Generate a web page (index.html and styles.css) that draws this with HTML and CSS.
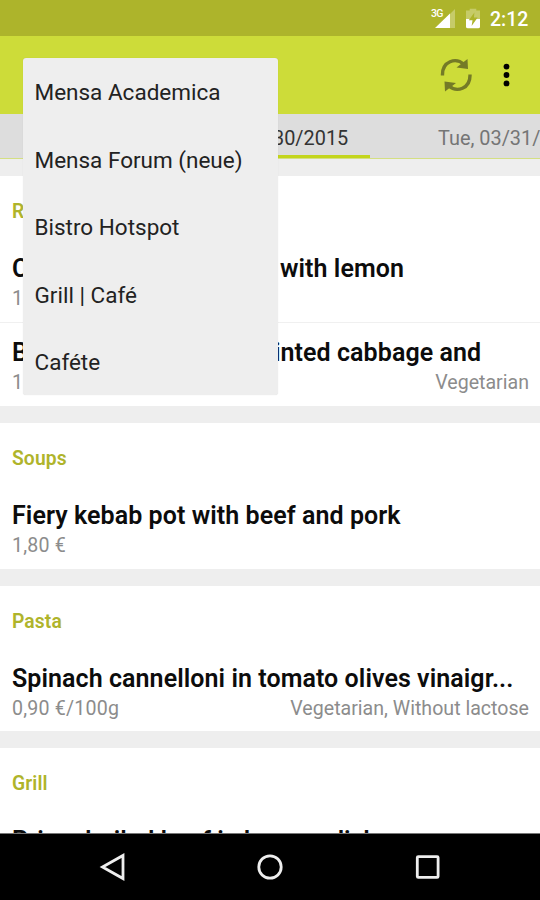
FILE: index.html
```
<!DOCTYPE html>
<html lang="en">
<head>
<meta charset="utf-8">
<title>Mensa</title>
<link rel="stylesheet" href="styles.css">
</head>
<body>
<div class="screen">
  <header class="status">
    <svg class="signal" width="21" height="20" viewBox="0 0 21 20"><path class="dim" d="M21 0V19H2Z"/><path class="lit" d="M16 4.500V19H1Z"/></svg>
    <span class="network">3G</span>
    <svg class="battery" width="14" height="21" viewBox="0 0 15 21"><path class="dim" d="M4 0h7v2h4v10H0V2h4z"/><path class="lit" d="M0 11h15v8q0 2-2 2H2q-2 0-2-2z"/><path class="bolt" d="M9 4 3 12.500h4l-1 6 6.500-9H8.500z"/></svg>
    <span class="clock">2:12</span>
  </header>
  <div class="toolbar">
    <svg class="refresh" width="32" height="34" viewBox="0 0 32 34"><g class="arc"><path d="M2.500 17.500C2 3 16-1 24 6.500"/><path d="M30 16.500c.5 14.500-13.500 18.500-21.500 11"/></g><path class="tip" d="M27.500 1l.5 10-11.500-1.500zM5 33.500 4.500 23.500 16 25z"/></svg>
    <svg class="more" width="8" height="24" viewBox="0 0 8 24"><circle cx="4.500" cy="3.600" r="2.900"/><circle cx="4.500" cy="12" r="2.900"/><circle cx="4.500" cy="20.400" r="2.900"/></svg>
  </div>
  <nav class="tabs">
    <div class="tab current"><span>30/2015</span></div>
    <div class="tab next"><span>Tue, 03/31/</span></div>
  </nav>
  <main class="list">
    <section class="card">
      <h2>R</h2>
      <article><h3 class="split"><span>C</span><span>with lemon</span></h3><p><span>1</span></p></article>
      <article class="ruled"><h3 class="split"><span>B</span><span class="pulled">inted cabbage and</span></h3><p><span>1</span><span>Vegetarian</span></p></article>
    </section>
    <section class="card">
      <h2>Soups</h2>
      <article><h3>Fiery kebab pot with beef and pork</h3><p><span>1,80 €</span></p></article>
    </section>
    <section class="card">
      <h2>Pasta</h2>
      <article><h3>Spinach cannelloni in tomato olives vinaigr...</h3><p><span>0,90 €/100g</span><span>Vegetarian, Without lactose</span></p></article>
    </section>
    <section class="card">
      <h2>Grill</h2>
      <article><h3>Prime boiled beef in horseradish</h3></article>
    </section>
  </main>
  <footer class="navbar">
    <svg width="28" height="30" viewBox="0 0 28 30"><path d="M24 3.500v23L3.500 15z"/></svg>
    <svg width="28" height="30" viewBox="0 0 28 30"><circle cx="14" cy="15" r="11.200"/></svg>
    <svg width="28" height="30" viewBox="0 0 28 30"><rect x="4.300" y="4.600" width="20.800" height="20.800" rx="1"/></svg>
  </footer>
  <ul class="menu">
    <li>Mensa Academica</li>
    <li>Mensa Forum (neue)</li>
    <li>Bistro Hotspot</li>
    <li>Grill | Café</li>
    <li>Caféte</li>
  </ul>
</div>
</body>
</html>
```
FILE: styles.css
```
* { box-sizing: border-box; margin: 0; padding: 0; }
body { font-family: Roboto, sans-serif; background: #eee; }
.screen { position: relative; width: 540px; height: 900px; overflow: hidden; display: flex; flex-direction: column; }
.status { position: relative; flex: none; height: 36px; background: #adb42b; display: flex; justify-content: flex-end; align-items: center; padding: 1px 11px 0 0; color: #fff; }
.dim { fill: #c6cb68; }
.lit { fill: #fff; }
.bolt { fill: #adb42b; }
.signal { margin: 0 11px 0 0; }
.network { position: absolute; left: 431px; top: 8px; font-size: 10.5px; line-height: 12px; font-weight: 500; letter-spacing: -.8px; }
.battery { margin-right: 10px; }
.clock { font-size: 19.5px; line-height: 24px; font-weight: 500; width: 39px; white-space: nowrap; padding-top: 2px; }
.toolbar { flex: none; height: 78px; background: #cddc39; display: flex; align-items: center; justify-content: flex-end; padding-right: 30px; gap: 30px; }
.arc { fill: none; stroke: #747a27; stroke-width: 3.4; }
.tip { fill: #747a27; }
.tabs { flex: none; height: 45px; background: #ddd; border-bottom: 1.5px solid #d4df83; display: flex; overflow: hidden; font-size: 19.9px; line-height: 24px; }
.tab { height: 45px; padding-top: 13px; white-space: nowrap; flex: none; }
.current { margin-left: 171px; width: 199px; padding-left: 102px; border-bottom: 4px solid #c3d51c; color: #333; }
.next { margin-left: 68px; color: #757575; }
.list { flex: 1; min-height: 0; overflow: hidden; padding-top: 17px; display: flex; flex-direction: column; gap: 17px; }
.card { flex: none; background: #fff; min-height: 145.5px; padding: 0 11px 0 12px; }
h2 { height: 61px; padding-top: 25px; font-size: 19.3px; line-height: 22px; font-weight: 600; color: #afb42b; letter-spacing: .1px; }
article { height: 84.5px; padding-top: 17px; }
.ruled { margin: 0 -11px 0 -12px; padding: 15px 11px 0 12px; border-top: 1.5px solid #f0f0f0; }
h3 { font-size: 25px; line-height: 30px; font-weight: 600; color: #0c0c0c; white-space: nowrap; letter-spacing: .07px; }
.split { display: grid; grid-template-columns: 268px 1fr; }
.pulled { margin-left: -6px; }
article p { display: flex; justify-content: space-between; margin-top: 3px; font-size: 19.6px; line-height: 24px; font-weight: 400; color: #8c8c8c; }
article p span:first-child { letter-spacing: .2px; }
article p span + span { letter-spacing: 0; }
.navbar { flex: none; height: 67px; background: #000; border-top: 1px solid #777; display: flex; justify-content: center; align-items: center; gap: 129px; }
.navbar svg { fill: none; stroke: #eee; stroke-width: 2.8; }
.menu { position: absolute; left: 23px; top: 58px; width: 255px; height: 337px; background: #eee; border-radius: 3px; list-style: none; box-shadow: 0 0 1px rgba(0,0,0,.15); }
.menu li { height: 67.5px; padding-left: 11.5px; font-size: 22.5px; line-height: 69px; color: #222; }
```
